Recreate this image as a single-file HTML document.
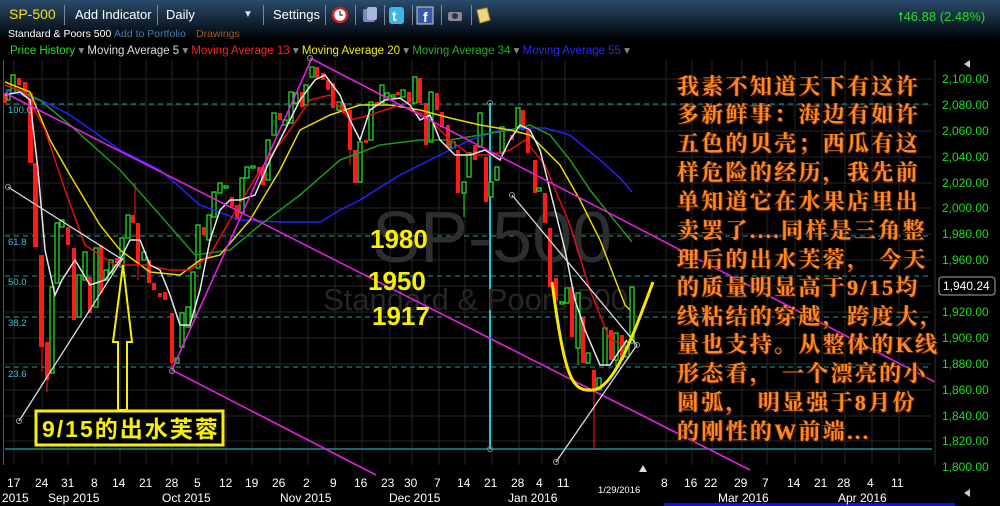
<!DOCTYPE html>
<html><head><meta charset="utf-8"><style>
body{margin:0;background:#000;width:1000px;height:506px;overflow:hidden;position:relative;font-family:"Liberation Sans",sans-serif}
.a{position:absolute;white-space:nowrap}
.hdr{position:absolute;left:0;top:0;width:1000px;height:40px;background:linear-gradient(#2b4b6b,#0c1824 70%,#000)}
.t{color:#fff;font-size:13px}
.sep{position:absolute;top:5px;width:1px;height:20px;background:#7a8a9a}
.cn{position:absolute;left:677px;color:#ff8a22;font-family:"Liberation Serif","Noto Serif CJK SC",serif;font-weight:bold;font-size:22px;letter-spacing:2.3px;white-space:nowrap;text-shadow:1px 1px 0 #5a2000,-1px 0 0 #5a2000;line-height:26px}
.ax{position:absolute;left:942px;color:#18e018;font-size:12px}
.fib{position:absolute;left:8px;color:#38c8d8;font-size:9.5px}
.d{position:absolute;top:476px;color:#fff;font-size:12px}
.m{position:absolute;top:491px;color:#fff;font-size:12px}
</style></head><body>
<div class="hdr"></div>
<div class="a" style="left:9px;top:6px;color:#f0e020;font-size:14px">SP-500</div>
<div class="sep" style="left:64px"></div>
<div class="a t" style="left:75px;top:7px">Add Indicator</div>
<div class="sep" style="left:157px"></div>
<div class="a t" style="left:166px;top:7px">Daily</div>
<div class="a" style="left:243px;top:9px;color:#ddd;font-size:10px">▼</div>
<div class="sep" style="left:263px"></div>
<div class="a t" style="left:273px;top:7px">Settings</div>
<div class="sep" style="left:325px"></div>
<svg class="a" style="left:331px;top:5px" width="160" height="22">
<circle cx="9" cy="10" r="7" fill="#fff" stroke="#d02020" stroke-width="2.5"/><path d="M9 6v4h3" stroke="#000" fill="none"/>
<rect x="24" y="0" width="1" height="20" fill="#7a8a9a"/>
<rect x="32" y="4" width="12" height="13" rx="2" fill="#7a8ab8"/><rect x="36" y="2" width="10" height="13" rx="2" fill="#aab4dc"/>
<rect x="53" y="0" width="1" height="20" fill="#7a8a9a"/>
<rect x="58" y="2" width="15" height="17" rx="3" fill="#38b8e8"/><text x="61" y="16" fill="#fff" font-size="14" font-weight="bold" font-family="Liberation Sans">t</text>
<rect x="81" y="0" width="1" height="20" fill="#7a8a9a"/>
<rect x="86" y="2" width="16" height="17" fill="#3858a8" stroke="#ccd" /><text x="92" y="17" fill="#fff" font-size="14" font-weight="bold" font-family="Liberation Sans">f</text>
<rect x="110" y="0" width="1" height="20" fill="#7a8a9a"/>
<rect x="117" y="7" width="14" height="9" rx="2" fill="#889"/><circle cx="124" cy="11" r="3" fill="#334"/>
<rect x="140" y="0" width="1" height="20" fill="#7a8a9a"/>
<path d="M146 5l10-2 3 12-10 3z" fill="#f0d878" stroke="#b09030"/>
</svg>
<div class="a" style="left:898px;top:8px;color:#20e020;font-size:13px">🠕46.88 (2.48%)</div>
<div class="a" style="left:8px;top:28px;color:#fff;font-size:10.5px">Standard &amp; Poors 500</div>
<div class="a" style="left:114px;top:28px;color:#4878b0;font-size:10.5px">Add to Portfolio</div>
<div class="a" style="left:196px;top:28px;color:#a85820;font-size:10.5px">Drawings</div>
<div class="a" style="left:10px;top:43px;font-size:11.5px;color:#888">
<span style="color:#20e020">Price History</span> ▾ <span style="color:#ddd">Moving Average 5</span> ▾ <span style="color:#ff2020">Moving Average 13</span> ▾ <span style="color:#f0f000">Moving Average 20</span> ▾ <span style="color:#20b020">Moving Average 34</span> ▾ <span style="color:#2828ff">Moving Average 55</span> ▾</div>

<svg class="a" style="left:0;top:0" width="1000" height="506">
<g stroke="#262626" stroke-width="1">
<path d="M14 60V465M42 60V465M68 60V465M95 60V465M120 60V465M146 60V465M172 60V465M198 60V465M226 60V465M252 60V465M280 60V465M308 60V465M335 60V465M362 60V465M390 60V465M412 60V465M439 60V465M465 60V465M492 60V465M519 60V465M542 60V465M565 60V465M666 60V465M692 60V465M712 60V465M742 60V465M767 60V465M795 60V465M822 60V465M845 60V465M872 60V465M899 60V465"/>
<path d="M5 79H932M5 105H932M5 131H932M5 157H932M5 183H932M5 208H932M5 234H932M5 260H932M5 286H932M5 312H932M5 338H932M5 364H932M5 390H932M5 416H932M5 441H932"/>
</g>
<rect x="3" y="60" width="1" height="405" fill="#555"/>
<g stroke="#1e7c84" stroke-width="1.3" stroke-dasharray="5,4">
<path d="M5 104H932M5 236H932M5 276H932M5 317H932M5 367H932"/></g>
<path d="M5 449H932" stroke="#1e8c94" stroke-width="1.5"/>
<path d="M490 103V449" stroke="#30c0d0" stroke-width="2"/>
<circle cx="490" cy="103" r="2.5" fill="none" stroke="#888"/><circle cx="490" cy="449" r="2.5" fill="none" stroke="#888"/>
<text x="372" y="262" fill="#2e2e2e" font-size="72" font-family="Liberation Sans">SP-500</text>
<text x="323" y="310" fill="#262626" font-size="31" font-family="Liberation Sans">Standard &amp; Poors 500</text>
<g fill="#ff1a1a">
<rect x="3" y="93" width="4" height="10"/><rect x="17" y="78" width="4" height="7"/><rect x="23" y="82" width="4" height="15"/><rect x="28" y="93" width="5" height="70"/><rect x="33" y="163" width="5" height="84"/><rect x="39" y="255" width="5" height="92"/><rect x="45" y="342" width="4" height="38"/><rect x="66" y="227" width="4" height="18"/><rect x="72" y="248" width="4" height="72"/><rect x="88" y="277" width="4" height="36"/><rect x="99" y="245" width="4" height="48"/><rect x="115" y="258" width="4" height="5"/><rect x="131" y="215" width="4" height="8"/><rect x="136" y="223" width="4" height="40"/><rect x="147" y="260" width="4" height="23"/><rect x="152" y="283" width="4" height="7"/><rect x="158" y="293" width="4" height="4"/><rect x="163" y="292" width="4" height="8"/><rect x="170" y="313" width="4" height="50"/><rect x="202" y="227" width="4" height="8"/><rect x="230" y="197" width="4" height="10"/><rect x="235" y="205" width="4" height="15"/><rect x="257" y="167" width="4" height="6"/><rect x="261" y="167" width="4" height="18"/><rect x="278" y="113" width="4" height="7"/><rect x="300" y="92" width="4" height="15"/><rect x="315" y="67" width="4" height="11"/><rect x="321" y="73" width="4" height="7"/><rect x="326" y="80" width="4" height="10"/><rect x="331" y="83" width="4" height="25"/><rect x="342" y="103" width="4" height="10"/><rect x="348" y="110" width="4" height="40"/><rect x="353" y="150" width="4" height="33"/><rect x="364" y="140" width="4" height="3"/><rect x="375" y="102" width="4" height="3"/><rect x="396" y="92" width="4" height="3"/><rect x="407" y="92" width="4" height="11"/><rect x="418" y="78" width="4" height="25"/><rect x="424" y="103" width="4" height="42"/><rect x="435" y="93" width="4" height="17"/><rect x="440" y="112" width="4" height="15"/><rect x="446" y="125" width="4" height="23"/><rect x="456" y="150" width="4" height="43"/><rect x="473" y="145" width="4" height="15"/><rect x="484" y="157" width="4" height="45"/><rect x="510" y="135" width="4" height="5"/><rect x="521" y="110" width="4" height="20"/><rect x="526" y="130" width="4" height="23"/><rect x="533" y="160" width="4" height="33"/><rect x="543" y="193" width="4" height="30"/><rect x="548" y="228" width="4" height="59"/><rect x="554" y="278" width="4" height="22"/><rect x="570" y="287" width="4" height="50"/><rect x="581" y="317" width="4" height="46"/><rect x="592" y="370" width="4" height="20"/><rect x="609" y="330" width="4" height="30"/><rect x="620" y="335" width="4" height="25"/>
</g>
<g stroke="#ff1a1a" stroke-width="1"><path d="M42 347V372M47 380V392M135 183V215M138 263V280M172 363V372M594 390V450M350 150V165"/></g>
<g fill="#000" stroke="#22dd22" stroke-width="1.3">
<rect x="7" y="90" width="3" height="10"/><rect x="11" y="75" width="4" height="18"/><rect x="50" y="287" width="4" height="86"/><rect x="55" y="223" width="4" height="60"/><rect x="60" y="220" width="4" height="7"/><rect x="77" y="275" width="4" height="42"/><rect x="83" y="252" width="4" height="28"/><rect x="94" y="248" width="4" height="59"/><rect x="104" y="270" width="4" height="10"/><rect x="109" y="260" width="4" height="13"/><rect x="120" y="238" width="4" height="29"/><rect x="126" y="215" width="4" height="23"/><rect x="142" y="252" width="4" height="8"/><rect x="175" y="358" width="4" height="5"/><rect x="180" y="313" width="4" height="34"/><rect x="186" y="307" width="4" height="20"/><rect x="191" y="272" width="4" height="45"/><rect x="196" y="225" width="4" height="43"/><rect x="207" y="215" width="4" height="25"/><rect x="212" y="192" width="4" height="25"/><rect x="218" y="183" width="4" height="10"/><rect x="224" y="186" width="4" height="2"/><rect x="240" y="178" width="4" height="35"/><rect x="245" y="167" width="4" height="11"/><rect x="251" y="166" width="4" height="2"/><rect x="266" y="140" width="4" height="40"/><rect x="272" y="113" width="4" height="22"/><rect x="283" y="120" width="4" height="5"/><rect x="289" y="92" width="4" height="31"/><rect x="294" y="93" width="4" height="10"/><rect x="304" y="85" width="4" height="20"/><rect x="310" y="67" width="4" height="10"/><rect x="337" y="102" width="4" height="8"/><rect x="358" y="142" width="4" height="40"/><rect x="369" y="102" width="4" height="38"/><rect x="380" y="85" width="4" height="18"/><rect x="385" y="93" width="4" height="4"/><rect x="391" y="95" width="4" height="2"/><rect x="401" y="90" width="4" height="7"/><rect x="413" y="77" width="4" height="26"/><rect x="429" y="92" width="4" height="50"/><rect x="451" y="142" width="4" height="6"/><rect x="462" y="182" width="4" height="11"/><rect x="467" y="153" width="4" height="24"/><rect x="478" y="113" width="4" height="34"/><rect x="489" y="182" width="4" height="15"/><rect x="495" y="167" width="4" height="13"/><rect x="500" y="127" width="4" height="26"/><rect x="516" y="108" width="4" height="19"/><rect x="537" y="188" width="4" height="3"/><rect x="560" y="302" width="4" height="2"/><rect x="565" y="288" width="4" height="15"/><rect x="576" y="293" width="4" height="55"/><rect x="586" y="353" width="4" height="10"/><rect x="597" y="378" width="4" height="12"/><rect x="603" y="328" width="4" height="37"/><rect x="614" y="333" width="4" height="27"/><rect x="625" y="342" width="4" height="15"/><rect x="630" y="287" width="4" height="56"/>
</g>
<g stroke="#22dd22" stroke-width="1"><path d="M464 193V217M578 348V365M616 360V372"/></g>
<g fill="none" stroke-width="1.5">
<polyline stroke="#2222ff" points="5,90 45,102 70,115 120,150 160,170 200,205 240,220 280,222 320,222 340,210 360,200 400,175 440,155 470,140 500,130 530,128 545,128 570,135 600,160 620,178 632,192"/>
<polyline stroke="#1a9a1a" points="5,85 40,100 70,125 120,170 160,215 195,255 230,250 260,225 300,195 340,160 380,145 420,140 450,140 480,135 510,130 530,125 550,135 570,160 590,190 610,215 632,242"/>
<polyline stroke="#e8d800" points="5,82 30,92 50,140 70,175 100,225 120,250 150,272 180,275 200,260 220,255 250,220 280,170 300,130 330,115 360,105 390,105 420,110 450,118 480,125 510,130 530,135 560,165 580,200 600,240 625,305 630,310"/>
<polyline stroke="#e01010" points="5,85 25,92 45,130 65,190 85,245 115,265 145,265 170,270 190,270 210,255 230,220 260,170 290,130 310,100 330,95 350,120 370,115 400,105 425,115 450,140 470,155 490,155 510,150 525,140 545,165 570,225 590,290 610,340 625,345"/>
<polyline stroke="#e8e8e8" points="5,95 20,92 30,100 38,170 45,250 55,295 62,280 75,260 90,285 105,280 120,260 130,240 140,240 150,265 160,270 170,295 180,325 190,325 200,290 210,240 220,210 230,200 240,200 255,195 270,160 285,130 300,100 315,80 325,75 340,95 350,120 360,140 370,110 385,100 400,98 410,105 420,120 430,115 440,140 455,155 470,155 485,150 500,160 510,140 520,125 530,130 540,150 555,210 565,250 575,300 585,330 600,365 610,365 620,350 627,340"/>
</g>
<g stroke="#e020e0" stroke-width="1.6" fill="none">
<path d="M5 93L750 470M310 58L935 382M172 370L376 475M172 370L312 58"/></g>
<g stroke="#ddd" stroke-width="1.3" fill="none">
<path d="M8 187L123 260M19 421L123 258M512 195L637 345M556 462L637 345"/></g>
<g fill="none" stroke="#999"><circle cx="8" cy="187" r="2.5"/><circle cx="19" cy="421" r="2.5"/><circle cx="172" cy="371" r="2.5"/><circle cx="512" cy="195" r="2.5"/><circle cx="556" cy="462" r="2.5"/><circle cx="637" cy="345" r="2.5"/><circle cx="310" cy="58" r="2.5"/></g>
<path d="M552 282C565 380 572 392 593 390C615 388 635 330 653 282" stroke="#f8e800" stroke-width="3" fill="none"/>
<path d="M123 265L132 342H127V410H118V342H113Z" stroke="#f8f000" stroke-width="2" fill="none"/>
<rect x="36" y="411" width="187" height="34" fill="#000" stroke="#f8f000" stroke-width="3"/>
<text x="42" y="437" fill="#f8f000" font-size="23" font-weight="bold" font-family="Liberation Sans,Noto Sans CJK SC,sans-serif" letter-spacing="2">9/15的出水芙蓉</text>
<g fill="#f8f000" font-size="26" font-weight="bold" font-family="Liberation Sans">
<text x="370" y="248">1980</text><text x="368" y="290">1950</text><text x="372" y="325">1917</text></g>
<path d="M935 60V465" stroke="#333"/>
<path d="M970 60l-6 4 6 4zM970 489l-6 4 6 4z" fill="#ccc"/>
<path d="M643 465l-4 7h8z" fill="#ddd"/>
<rect x="664" y="503" width="291" height="3" fill="#1010e0"/>
<rect x="939" y="277" width="56" height="18" rx="3" fill="#000" stroke="#aaa"/>
</svg>
<div class="fib" style="top:105px">100.0</div><div class="fib" style="top:237px">61.8</div><div class="fib" style="top:277px">50.0</div><div class="fib" style="top:318px">38.2</div><div class="fib" style="top:369px">23.6</div>
<div class="ax" style="top:72px">2,100.00</div><div class="ax" style="top:98px">2,080.00</div><div class="ax" style="top:124px">2,060.00</div><div class="ax" style="top:150px">2,040.00</div><div class="ax" style="top:176px">2,020.00</div><div class="ax" style="top:201px">2,000.00</div><div class="ax" style="top:227px">1,980.00</div><div class="ax" style="top:253px">1,960.00</div><div class="ax" style="top:279px;left:943px;color:#fff">1,940.24</div><div class="ax" style="top:305px">1,920.00</div><div class="ax" style="top:331px">1,900.00</div><div class="ax" style="top:357px">1,880.00</div><div class="ax" style="top:383px">1,860.00</div><div class="ax" style="top:409px">1,840.00</div><div class="ax" style="top:434px">1,820.00</div><div class="ax" style="top:460px">1,800.00</div>
<div class="cn" style="top:74px">我素不知道天下有这许</div>
<div class="cn" style="top:102px">多新鲜事：海边有如许</div>
<div class="cn" style="top:131px">五色的贝壳；西瓜有这</div>
<div class="cn" style="top:160px">样危险的经历，我先前</div>
<div class="cn" style="top:189px">单知道它在水果店里出</div>
<div class="cn" style="top:218px">卖罢了....同样是三角整</div>
<div class="cn" style="top:247px">理后的出水芙蓉， 今天</div>
<div class="cn" style="top:275px">的质量明显高于9/15均</div>
<div class="cn" style="top:304px">线粘结的穿越，跨度大，</div>
<div class="cn" style="top:332px">量也支持。从整体的K线</div>
<div class="cn" style="top:361px">形态看， 一个漂亮的小</div>
<div class="cn" style="top:390px">圆弧， 明显强于8月份</div>
<div class="cn" style="top:419px">的刚性的W前端...</div>
<div class="d" style="left:7px">17</div><div class="d" style="left:35px">24</div><div class="d" style="left:61px">31</div><div class="d" style="left:91px">8</div><div class="d" style="left:112px">14</div><div class="d" style="left:139px">21</div><div class="d" style="left:165px">28</div><div class="d" style="left:194px">5</div><div class="d" style="left:219px">12</div><div class="d" style="left:245px">19</div><div class="d" style="left:272px">26</div><div class="d" style="left:303px">2</div><div class="d" style="left:330px">9</div><div class="d" style="left:354px">16</div><div class="d" style="left:381px">23</div><div class="d" style="left:404px">30</div><div class="d" style="left:434px">7</div><div class="d" style="left:457px">14</div><div class="d" style="left:484px">21</div><div class="d" style="left:511px">28</div><div class="d" style="left:536px">4</div><div class="d" style="left:557px">11</div><div class="a" style="left:598px;top:485px;color:#fff;font-size:9.5px">1/29/2016</div><div class="d" style="left:661px">8</div><div class="d" style="left:684px">16</div><div class="d" style="left:704px">22</div><div class="d" style="left:734px">29</div><div class="d" style="left:762px">7</div><div class="d" style="left:787px">14</div><div class="d" style="left:814px">21</div><div class="d" style="left:837px">28</div><div class="d" style="left:867px">4</div><div class="d" style="left:891px">11</div>
<div class="m" style="left:2px">2015</div><div class="m" style="left:48px">Sep 2015</div><div class="m" style="left:162px">Oct 2015</div><div class="m" style="left:280px">Nov 2015</div><div class="m" style="left:389px">Dec 2015</div><div class="m" style="left:508px">Jan 2016</div><div class="m" style="left:718px">Mar 2016</div><div class="m" style="left:838px">Apr 2016</div>
</body></html>
